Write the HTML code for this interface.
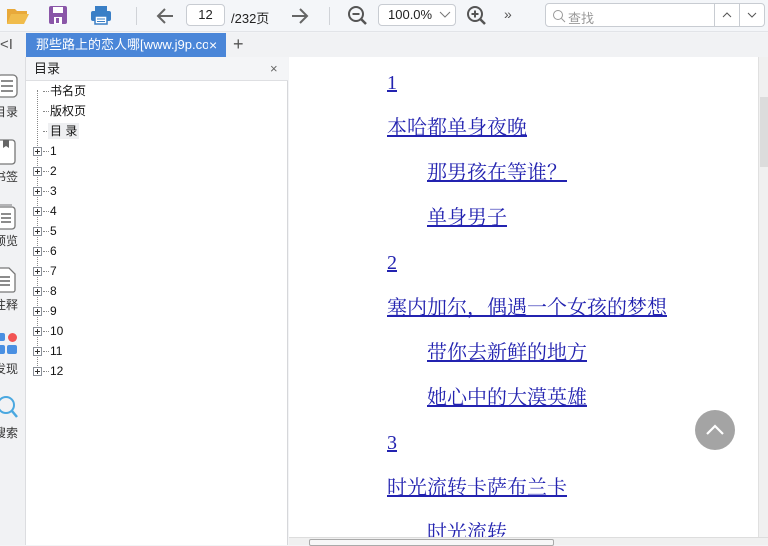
<!DOCTYPE html>
<html><head><meta charset="utf-8"><style>
*{margin:0;padding:0;box-sizing:border-box}
body{width:768px;height:545px;overflow:hidden;background:#f3f4f6;font-family:"Liberation Sans","Noto Sans CJK SC",sans-serif;font-size:12px;color:#222;position:relative}
.abs{position:absolute}
#tb{left:0;top:0;width:768px;height:32px;background:#f4f6f9;border-bottom:1px solid #e2e4e8}
.box{border:1px solid #c8ccd2;border-radius:4px;background:#fff}
#tabs{left:0;top:33px;width:768px;height:24px;background:#f1f2f4}
#tab{left:26px;top:33px;width:200px;height:24px;background:#4a86d8;color:#fff;font-size:13px;line-height:24px}
#side{left:0;top:57px;width:26px;height:488px;background:#f1f2f4;border-right:1px solid #dcdde0}
#panel{left:26px;top:57px;width:262px;height:488px;background:#fff;border-right:1px solid #d6d7da}
#ph{left:0;top:0;width:262px;height:24px;background:#f4f5f7;border-bottom:1px solid #dedfe2;font-size:13px;line-height:24px;padding-left:8px}
.tr{position:absolute;left:24px;font-size:12px;line-height:16px;color:#111}
.pl{position:absolute;left:7px;width:9px;height:9px;border:1px solid #8a8f98;background:#fff}
.pl:before{content:"";position:absolute;left:1px;top:3px;width:5px;height:1px;background:#333}
.pl:after{content:"";position:absolute;left:3px;top:1px;width:1px;height:5px;background:#333}
.dh{position:absolute;left:17px;width:6px;border-top:1px dotted #888}
#ct{left:289px;top:57px;width:469px;height:480px;background:#fff}
.lk{position:absolute;font-family:"Liberation Serif","Noto Serif CJK SC",serif;font-size:20px;color:#2323b0;text-decoration:underline;white-space:nowrap;line-height:22px}
.lab{position:absolute;left:-6px;font-size:12px;color:#333}
</style></head><body>
<div id="tb" class="abs">
<svg class="abs" style="left:6px;top:6px" width="24" height="20"><path d="M1 3h8l2 2h10v3H6L1 18z" fill="#e8a93a"/><path d="M5 8h18l-5 10H1z" fill="#f0bc4c"/></svg>
<svg class="abs" style="left:48px;top:5px" width="20" height="20"><rect x="1" y="1" width="18" height="18" rx="2" fill="#8a56a8"/><rect x="5" y="2" width="10" height="6" fill="#fff"/><rect x="6" y="12" width="8" height="7" fill="#fff"/><rect x="8" y="13" width="3" height="5" fill="#8a56a8"/></svg>
<svg class="abs" style="left:90px;top:5px" width="22" height="20"><rect x="5" y="1" width="12" height="5" fill="#3a7fc6"/><rect x="1" y="6" width="20" height="10" rx="2" fill="#3a7fc6"/><rect x="5" y="11" width="12" height="8" fill="#fff" stroke="#3a7fc6" stroke-width="1.5"/><line x1="7" y1="14" x2="15" y2="14" stroke="#3a7fc6"/><line x1="7" y1="16.5" x2="15" y2="16.5" stroke="#3a7fc6"/></svg>
<div class="abs" style="left:136px;top:7px;width:1px;height:18px;background:#d0d3d8"></div>
<svg class="abs" style="left:155px;top:6px" width="20" height="20"><path d="M18 10H3M10 3L3 10l7 7" stroke="#666" stroke-width="2" fill="none"/></svg>
<div class="abs box" style="left:186px;top:4px;width:39px;height:22px;font-size:13px;line-height:20px;text-align:center">12</div>
<div class="abs" style="left:231px;top:8px;font-size:13px">/232页</div>
<svg class="abs" style="left:290px;top:6px" width="20" height="20"><path d="M2 10h15M10 3l7 7-7 7" stroke="#666" stroke-width="2" fill="none"/></svg>
<div class="abs" style="left:329px;top:7px;width:1px;height:18px;background:#d0d3d8"></div>
<svg class="abs" style="left:347px;top:5px" width="22" height="22"><circle cx="9" cy="9" r="7" stroke="#555" stroke-width="2" fill="none"/><line x1="5.5" y1="9" x2="12.5" y2="9" stroke="#555" stroke-width="2"/><line x1="14" y1="14" x2="19" y2="19" stroke="#555" stroke-width="2.5"/></svg>
<div class="abs box" style="left:378px;top:4px;width:78px;height:22px;font-size:13px;line-height:20px;padding-left:9px">100.0%<svg class="abs" style="left:60px;top:6px" width="12" height="8"><path d="M1 1l5 5 5-5" stroke="#777" fill="none"/></svg></div>
<svg class="abs" style="left:466px;top:5px" width="22" height="22"><circle cx="9" cy="9" r="7" stroke="#555" stroke-width="2" fill="none"/><line x1="5.5" y1="9" x2="12.5" y2="9" stroke="#555" stroke-width="2"/><line x1="9" y1="5.5" x2="9" y2="12.5" stroke="#555" stroke-width="2"/><line x1="14" y1="14" x2="19" y2="19" stroke="#555" stroke-width="2.5"/></svg>
<div class="abs" style="left:504px;top:6px;font-size:14px;color:#555">»</div>
<div class="abs box" style="left:545px;top:3px;width:220px;height:24px">
<svg class="abs" style="left:6px;top:5px" width="14" height="14"><circle cx="6" cy="6" r="4.5" stroke="#999" fill="none"/><line x1="9.5" y1="9.5" x2="13" y2="13" stroke="#999"/></svg>
<div class="abs" style="left:22px;top:4px;font-size:13px;color:#999">查找</div>
<div class="abs" style="left:168px;top:0;width:1px;height:22px;background:#c8ccd2"></div>
<div class="abs" style="left:193px;top:0;width:1px;height:22px;background:#c8ccd2"></div>
<svg class="abs" style="left:176px;top:8px" width="10" height="6"><path d="M1 5l4-4 4 4" stroke="#555" fill="none"/></svg>
<svg class="abs" style="left:201px;top:8px" width="10" height="6"><path d="M1 1l4 4 4-4" stroke="#555" fill="none"/></svg>
</div>
</div>
<div id="tabs" class="abs"><div class="abs" style="left:0;top:3px;font-size:15px;color:#555">&lt;I</div><div class="abs" style="left:233px;top:1px;font-size:18px;color:#555">+</div></div>
<div id="tab" class="abs"><div class="abs" style="left:10px;top:0;width:172px;overflow:hidden;white-space:nowrap">那些路上的恋人哪[www.j9p.com]</div><span style="position:absolute;left:183px;top:0;font-size:14px">×</span></div>
<div id="side" class="abs">
<svg class="abs" style="left:-4px;top:17px" width="26" height="28"><rect x="1" y="1" width="20" height="22" rx="4" fill="#fff" stroke="#777" stroke-width="1.3"/><path d="M5 7h12M5 12h12M5 17h12" stroke="#666" stroke-width="1.6"/></svg>
<div class="lab" style="top:46px">目录</div>
<svg class="abs" style="left:-4px;top:82px" width="24" height="28"><rect x="1" y="1" width="18" height="24" rx="3" fill="#fff" stroke="#777" stroke-width="1.3"/><path d="M7 1v8l3-2 3 2V1" fill="#666"/></svg>
<div class="lab" style="top:111px">书签</div>
<svg class="abs" style="left:-4px;top:147px" width="24" height="28"><rect x="1" y="3" width="18" height="22" rx="3" fill="#fff" stroke="#777" stroke-width="1.3"/><path d="M4 1h12" stroke="#777"/><path d="M5 10h10M5 14h10M5 18h10" stroke="#666" stroke-width="1.5"/></svg>
<div class="lab" style="top:175px">预览</div>
<svg class="abs" style="left:-4px;top:210px" width="24" height="28"><path d="M1 3a2 2 0 0 1 2-2h10l6 6v16a2 2 0 0 1-2 2H3a2 2 0 0 1-2-2z" fill="#fff" stroke="#777" stroke-width="1.3"/><path d="M4 10h10M4 14h10M4 18h10" stroke="#666" stroke-width="1.5"/></svg>
<div class="lab" style="top:239px">注释</div>
<div class="abs" style="left:-3px;top:276px;width:8px;height:8px;border-radius:2px;background:#4a90e2"></div>
<div class="abs" style="left:8px;top:276px;width:9px;height:9px;border-radius:50%;background:#f25454"></div>
<div class="abs" style="left:-3px;top:288px;width:8px;height:9px;border-radius:2px;background:#4a90e2"></div>
<div class="abs" style="left:7px;top:288px;width:10px;height:9px;border-radius:2px;background:#4a90e2"></div>
<div class="lab" style="top:303px">发现</div>
<svg class="abs" style="left:-4px;top:338px" width="24" height="26"><circle cx="10" cy="10" r="8" stroke="#4aa8e0" stroke-width="2" fill="none"/><line x1="16" y1="16" x2="21" y2="22" stroke="#4aa8e0" stroke-width="2.5"/></svg>
<div class="lab" style="top:367px">搜索</div>
</div>
<div id="panel" class="abs">
<div id="ph" class="abs">目录<span style="position:absolute;left:244px;top:0;color:#666;font-size:13px">×</span></div>
<div class="abs" style="left:11px;top:33px;height:282px;border-left:1px dotted #888"></div>
<div class="dh" style="top:34px"></div><div class="tr" style="top:26px">书名页</div>
<div class="dh" style="top:54px"></div><div class="tr" style="top:46px">版权页</div>
<div class="dh" style="top:74px"></div><div class="tr" style="top:66px;background:#eeeff1;padding:0 2px;left:22px;">目 录</div>
<div class="dh" style="top:94px"></div><div class="pl" style="top:90px"></div><div class="tr" style="top:86px">1</div>
<div class="dh" style="top:114px"></div><div class="pl" style="top:110px"></div><div class="tr" style="top:106px">2</div>
<div class="dh" style="top:134px"></div><div class="pl" style="top:130px"></div><div class="tr" style="top:126px">3</div>
<div class="dh" style="top:154px"></div><div class="pl" style="top:150px"></div><div class="tr" style="top:146px">4</div>
<div class="dh" style="top:174px"></div><div class="pl" style="top:170px"></div><div class="tr" style="top:166px">5</div>
<div class="dh" style="top:194px"></div><div class="pl" style="top:190px"></div><div class="tr" style="top:186px">6</div>
<div class="dh" style="top:214px"></div><div class="pl" style="top:210px"></div><div class="tr" style="top:206px">7</div>
<div class="dh" style="top:234px"></div><div class="pl" style="top:230px"></div><div class="tr" style="top:226px">8</div>
<div class="dh" style="top:254px"></div><div class="pl" style="top:250px"></div><div class="tr" style="top:246px">9</div>
<div class="dh" style="top:274px"></div><div class="pl" style="top:270px"></div><div class="tr" style="top:266px">10</div>
<div class="dh" style="top:294px"></div><div class="pl" style="top:290px"></div><div class="tr" style="top:286px">11</div>
<div class="dh" style="top:314px"></div><div class="pl" style="top:310px"></div><div class="tr" style="top:306px">12</div>
</div>
<div id="ct" class="abs">
<div class="lk" style="left:98px;top:15px">1</div>
<div class="lk" style="left:98px;top:60px">本哈都单身夜晚</div>
<div class="lk" style="left:138px;top:105px">那男孩在等谁？</div>
<div class="lk" style="left:138px;top:150px">单身男子</div>
<div class="lk" style="left:98px;top:195px">2</div>
<div class="lk" style="left:98px;top:240px">塞内加尔，偶遇一个女孩的梦想</div>
<div class="lk" style="left:138px;top:285px">带你去新鲜的地方</div>
<div class="lk" style="left:138px;top:330px">她心中的大漠英雄</div>
<div class="lk" style="left:98px;top:375px">3</div>
<div class="lk" style="left:98px;top:420px">时光流转卡萨布兰卡</div>
<div class="lk" style="left:138px;top:465px">时光流转</div>
<div class="abs" style="left:406px;top:353px;width:40px;height:40px;border-radius:50%;background:#a4a4a4"><svg class="abs" style="left:10px;top:12px" width="20" height="14"><path d="M2 12l8-8 8 8" stroke="#fff" stroke-width="2.2" fill="none"/></svg></div>
</div>
<div class="abs" style="left:758px;top:57px;width:10px;height:480px;background:#f0f0f0;border-left:1px solid #e0e0e0"><div class="abs" style="left:1px;top:40px;width:8px;height:70px;background:#dcdcdc"></div></div>
<div class="abs" style="left:289px;top:537px;width:479px;height:8px;background:#f0f0f0;border-top:1px solid #ddd"><div class="abs" style="left:20px;top:1px;width:245px;height:7px;border:1px solid #aaa;background:#f7f7f7;border-radius:2px"></div></div>
</body></html>
